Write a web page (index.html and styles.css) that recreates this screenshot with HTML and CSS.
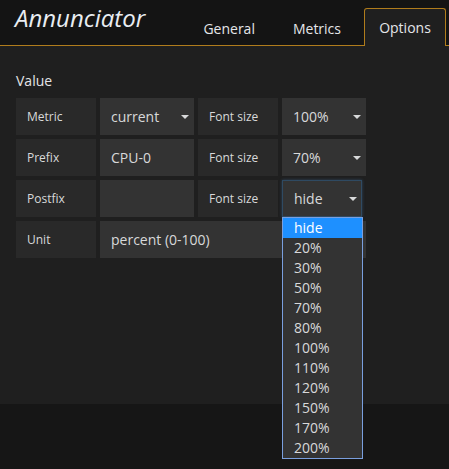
FILE: index.html
```html
<!DOCTYPE html>
<html>
<head>
<meta charset="utf-8">
<link rel="stylesheet" href="styles.css">
</head>
<body>
<div class="app">
  <header class="header">
    <h1 class="title">Annunciator</h1>
    <nav class="tabs">
      <span class="tab">General</span>
      <span class="tab">Metrics</span>
      <span class="tab active">Options</span>
    </nav>
  </header>
  <main class="content">
    <h2 class="section">Value</h2>
    <div class="form">
      <div class="row">
        <div class="label">Metric</div>
        <div class="field select w94">current<span class="caret"></span></div>
        <div class="label">Font size</div>
        <div class="field select w84">100%<span class="caret"></span></div>
      </div>
      <div class="row">
        <div class="label">Prefix</div>
        <div class="field w94">CPU-0</div>
        <div class="label">Font size</div>
        <div class="field select w84">70%<span class="caret"></span></div>
      </div>
      <div class="row">
        <div class="label">Postfix</div>
        <div class="field w94"></div>
        <div class="label">Font size</div>
        <div class="dd-wrap">
          <div class="field select focus">hide<span class="caret"></span></div>
          <ul class="dropdown">
            <li class="sel">hide</li>
            <li>20%</li>
            <li>30%</li>
            <li>50%</li>
            <li>70%</li>
            <li>80%</li>
            <li>100%</li>
            <li>110%</li>
            <li>120%</li>
            <li>150%</li>
            <li>170%</li>
            <li>200%</li>
          </ul>
        </div>
      </div>
      <div class="row">
        <div class="label">Unit</div>
        <div class="field wide">percent (0-100)</div>
      </div>
    </div>
  </main>
  <footer class="footer"></footer>
</div>
</body>
</html>
```
FILE: styles.css
```css
* { box-sizing: border-box; }
html, body { margin: 0; padding: 0; background: #161616; }
body {
  font-family: "Open Sans", "Noto Sans", sans-serif;
  color: #d8d9da;
  width: 449px;
  height: 469px;
  overflow: hidden;
}
.app { display: flex; flex-direction: column; height: 469px; }
.header {
  height: 46px;
  background: #141414;
  border-bottom: 1px solid #b07c1c;
  display: flex;
  justify-content: space-between;
  align-items: flex-end;
  padding: 0 3px 0 15px;
}
.title {
  margin: 0;
  align-self: flex-start;
  font-size: 24px;
  font-style: italic;
  font-weight: 400;
  color: #e9edf2;
  line-height: 30px;
  padding-top: 3px;
}
.tabs { display: flex; align-items: flex-end; margin-bottom: -1px; }
.tab {
  font-size: 14px;
  color: #e4e6e9;
  padding: 0 14px 0 14px;
  height: 37px;
  line-height: 37px;
  border: 1px solid transparent;
  border-bottom: none;
}
.tab:first-child { margin-right: 8px; }
.tab.active {
  background: #1f1f1f;
  border-color: #b07c1c;
  border-radius: 3px 3px 0 0;
  padding: 0 14px 0 14px;
  margin-left: 8px;
  height: 38px;
  line-height: 38px;
  width: 82px;
  text-align: center;
}
.content {
  background: #1f1f1f;
  height: 358px;
  padding: 25px 16px 0 16px;
}
.section {
  margin: 0 0 7px 0;
  font-size: 14px;
  font-weight: 500;
  line-height: 20px;
  color: #e3e4e6;
}
.form { display: flex; flex-direction: column; gap: 4px; }
.row { display: flex; gap: 4px; height: 37px; }
.label {
  width: 80px;
  background: #292929;
  font-size: 12px;
  line-height: 37px;
  padding-left: 11px;
  color: #d8d9da;
}
.field {
  position: relative;
  background: #333333;
  font-size: 14px;
  line-height: 37px;
  padding-left: 11px;
  color: #d8d9da;
}
.w94 { width: 94px; }
.w84 { width: 84px; }
.wide { width: 266px; }
.caret {
  position: absolute;
  right: 5px;
  top: 17px;
  width: 0; height: 0;
  border-left: 4px solid transparent;
  border-right: 4px solid transparent;
  border-top: 4px solid #d8d9da;
}
.dd-wrap { position: relative; width: 80px; }
.field.focus {
  width: 80px;
  height: 37px;
  line-height: 35px;
  border: 1px solid #2f4a62;
  box-shadow: 0 0 3px rgba(82, 148, 212, 0.35);
}
.field.focus .caret { right: 4px; top: 16px; }
.dropdown {
  position: absolute;
  left: 0;
  top: 37px;
  width: 81px;
  margin: 0;
  padding: 0;
  list-style: none;
  background: #333333;
  border: 1px solid #7a9fde;
  z-index: 5;
}
.dropdown li {
  height: 20px;
  line-height: 20px;
  font-size: 14px;
  padding-left: 11px;
  color: #d8d9da;
}
.dropdown li.sel { background: #1e90ff; color: #ffffff; }
.footer { flex: 1; background: #161616; }
```
